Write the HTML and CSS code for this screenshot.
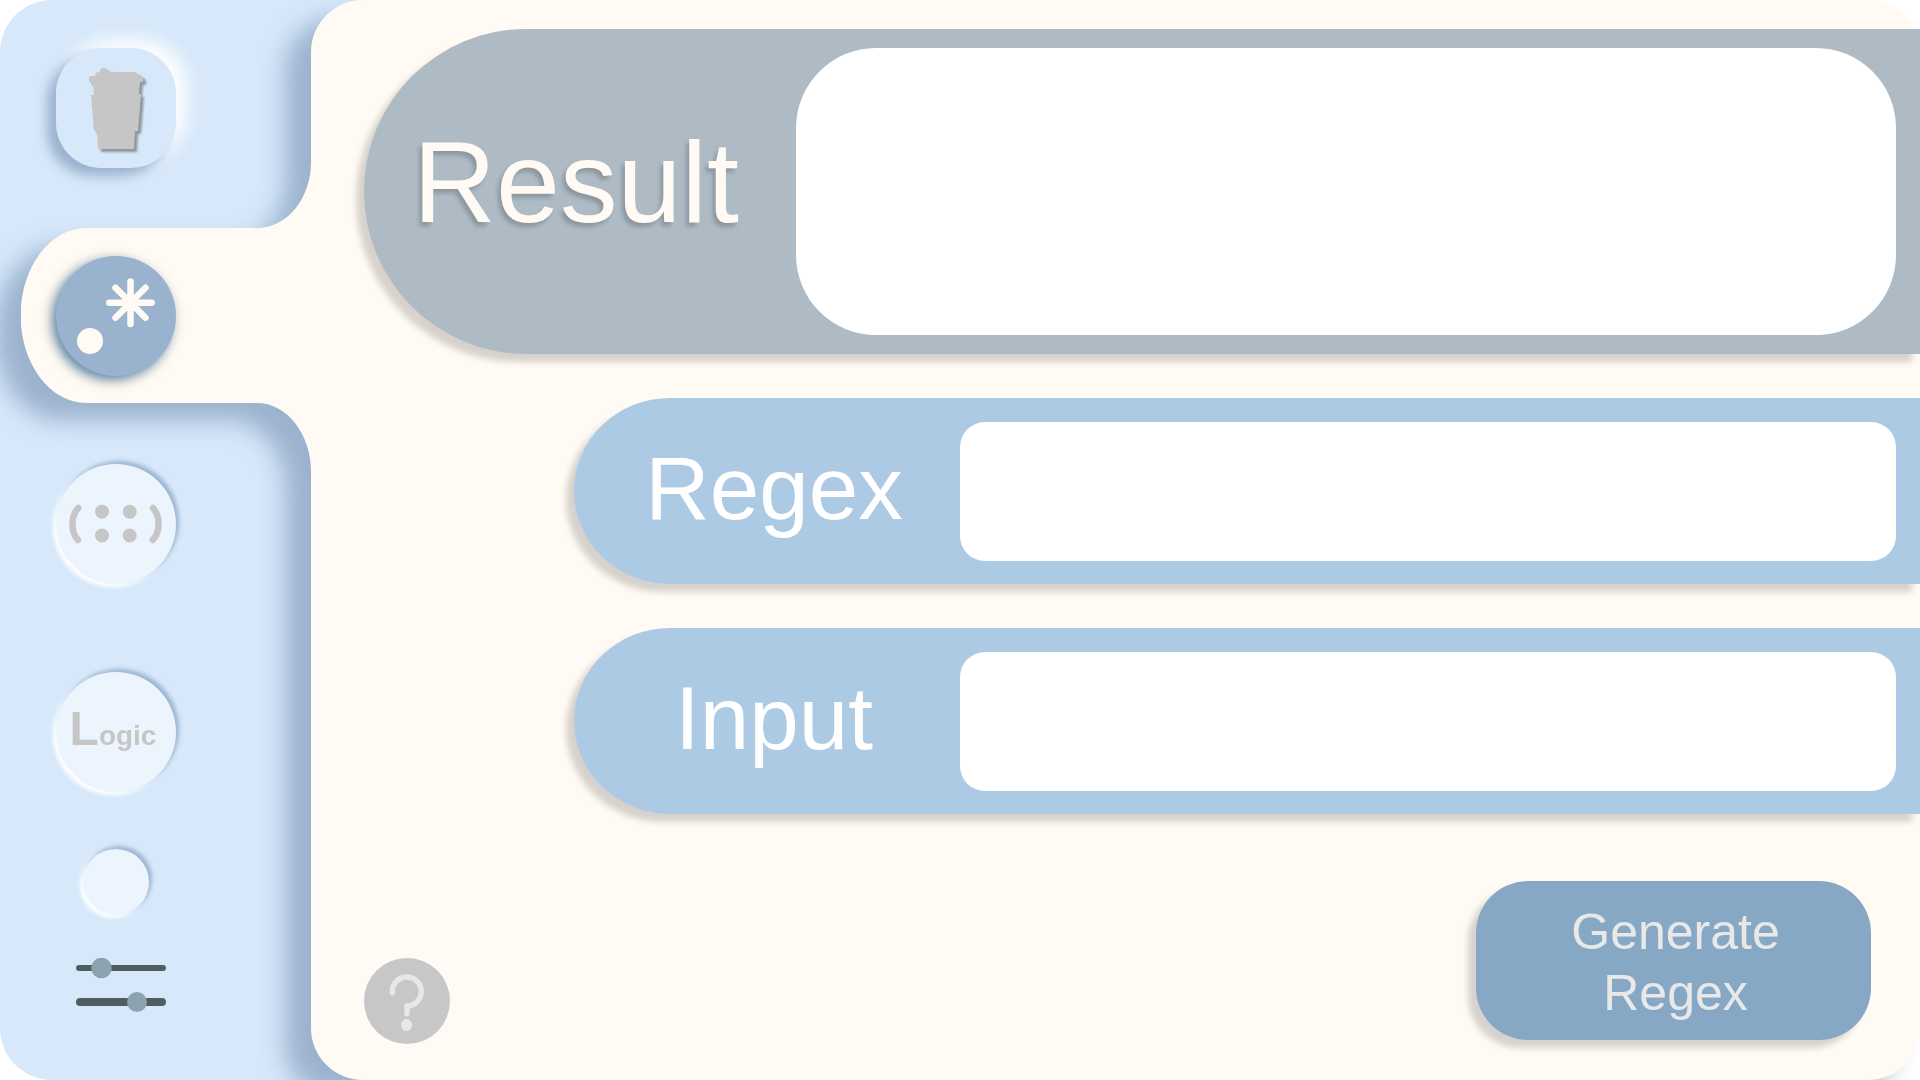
FILE: index.html
```html
<!DOCTYPE html>
<html lang="en">
<head>
<meta charset="utf-8">
<meta name="viewport" content="width=device-width, initial-scale=1">
<title>Regex Generator</title>
<link rel="stylesheet" href="styles.css">
</head>
<body>
<div class="app">
  <nav class="sidebar" aria-label="Tools">
    <button class="tool tool-trash" type="button" aria-label="Clear">
      <svg viewBox="0 0 120 120" aria-hidden="true">
        <path class="cup" d="M40 25 Q41 24 44 24 A4 4 0 1 1 52 24 H79 Q81 24 82 27 Q87 27 87 31 V34 H84 L83 46 H85 L82 83 H79 L78 101 H42 L41 83 H38 L35 47 H38 L37 34 H33 V30 Q33 28 36 28 H39 Z"/>
      </svg>
    </button>
    <button class="tool tool-active" type="button" aria-label="Wildcards" aria-current="page">
      <svg viewBox="0 0 120 120" aria-hidden="true">
        <path class="star" d="M74.500 25.500V68M53.300 46.700H95.700M59.500 31.700L89.500 61.700M89.500 31.700L59.500 61.700"/>
        <circle class="point" cx="34" cy="85" r="13"/>
      </svg>
    </button>
    <button class="tool tool-round" type="button" aria-label="Groups">
      <svg viewBox="0 0 120 120" aria-hidden="true">
        <path class="paren" d="M22.300 44C14.500 52 14.500 68 22 76M97 44C104.500 52 104.500 68 96.700 76"/>
        <g class="dots"><circle cx="46" cy="47.700" r="7"/><circle cx="73.700" cy="47.700" r="7"/><circle cx="46" cy="71.500" r="7"/><circle cx="73.700" cy="71.500" r="7"/></g>
      </svg>
    </button>
    <button class="tool tool-round tool-logic" type="button"><span class="logic"><span class="logic-cap">L</span>ogic</span></button>
    <button class="tool-small" type="button" aria-label="More"></button>
    <button class="settings" type="button" aria-label="Settings">
      <svg viewBox="0 0 100 54" width="100" height="54" aria-hidden="true">
        <rect class="track" x="10" y="7" width="90" height="6" rx="3"/>
        <circle class="knob" cx="35.500" cy="10" r="10.300"/>
        <rect class="track" x="10" y="40" width="90" height="8" rx="4"/>
        <circle class="knob" cx="71" cy="44" r="10"/>
      </svg>
    </button>
  </nav>

  <main class="panel">
    <div class="panel-shape" aria-hidden="true">
      <svg class="tab" viewBox="0 0 292 310" width="292" height="310">
        <path d="M292 0H290A54 66 0 0 1 236 66H65A65 87 0 0 0 65 241H236A54 69 0 0 1 290 310H292Z"/>
      </svg>
    </div>
    <form class="form">
      <div class="bar bar-result">
        <label for="result">Result</label>
        <textarea id="result" readonly></textarea>
      </div>
      <div class="bar bar-field">
        <label for="regex">Regex</label>
        <input id="regex" type="text">
      </div>
      <div class="bar bar-field">
        <label for="input">Input</label>
        <input id="input" type="text">
      </div>
      <div class="footer">
        <button class="help" type="button" aria-label="Help">
          <svg viewBox="0 0 86 86" aria-hidden="true">
            <path class="hook" d="M28.300 34.700A14.500 14.500 0 1 1 43 48V55.500"/>
            <ellipse class="hook-dot" cx="42.500" cy="67" rx="5.500" ry="6"/>
          </svg>
        </button>
        <button class="generate" type="button">Generate Regex</button>
      </div>
    </form>
  </main>
</div>
</body>
</html>
```
FILE: styles.css
```css
* {
  box-sizing: border-box;
}

body {
  margin: 0;
  background: #fff;
  font-family: "Liberation Sans", Arial, sans-serif;
}

button {
  padding: 0;
  border: 0;
  font: inherit;
  cursor: pointer;
}

svg {
  display: block;
}

.app {
  display: flex;
  min-height: 100vh;
  isolation: isolate;
  position: relative;
  overflow: hidden;
}

/* Sidebar: its background runs on beneath the rounded edge of the panel */
.sidebar {
  flex: none;
  width: 311px;
  padding: 48px 0 48px 56px;
  display: grid;
  grid-template-columns: 120px;
  justify-items: center;
  align-content: start;
}

.sidebar::before {
  content: "";
  position: absolute;
  z-index: -2;
  inset: 0 auto 0 0;
  width: 480px;
  border-radius: 52px;
  background: #d7e8fa;
}

.tool {
  position: relative;
  z-index: 1;
  width: 120px;
  height: 120px;
  margin-bottom: 88px;
  border-radius: 50%;
}

.tool-trash {
  border-radius: 45px;
  background: #d7e8fa;
  box-shadow: -9px 8px 12px #9bb2ce, 10px -8px 18px #fff;
}

.tool-active {
  background: #99b2cd;
  box-shadow: -4px 4px 12px #5b83a0;
}

.tool-round,
.tool-small {
  background: #ecf5fd;
  box-shadow: 3px -3px 4px #9bb5d2, -3px 3px 4px #fff;
}

.tool-logic {
  margin-bottom: 57px;
}

.tool-small {
  width: 66px;
  height: 66px;
  margin-bottom: 43px;
  border-radius: 50%;
}

.settings {
  background: none;
}

.cup {
  fill: #c6c6c6;
  filter: drop-shadow(3px 3px 1px #8f959c);
}

.star {
  fill: none;
  stroke: #fffaf3;
  stroke-width: 6.5;
  stroke-linecap: round;
}

.point {
  fill: #fffaf3;
}

.paren {
  fill: none;
  stroke: #c6c6c6;
  stroke-width: 6.5;
  stroke-linecap: round;
}

.dots {
  fill: #c6c6c6;
}

.logic {
  display: block;
  padding-right: 6px;
  color: #c6c6c6;
  font-size: 28px;
  font-weight: bold;
  line-height: 60px;
}

.logic-cap {
  font-size: 48px;
}

.track {
  fill: #4f5f60;
}

.knob {
  fill: #8ba2b1;
}

/* Panel */
.panel {
  position: relative;
  flex: 1;
  min-width: 0;
  display: flex;
}

.panel-shape {
  position: absolute;
  z-index: -1;
  inset: 0;
  border-radius: 52px;
  background: #fffaf3;
  filter: drop-shadow(-26px 18px 12px #9bb2ce);
}

.tab {
  position: absolute;
  top: 162px;
  left: -290px;
  fill: #fffaf3;
}

.form {
  flex: 1;
  min-width: 0;
  display: flex;
  flex-direction: column;
  gap: 44px;
  padding-top: 29px;
}

.bar {
  display: grid;
  box-shadow: -8px 8px 6px rgba(0, 0, 0, 0.16);
}

.bar label {
  align-self: center;
  text-align: center;
}

.bar input,
.bar textarea {
  width: 100%;
  min-width: 0;
  border: 0;
  outline: 0;
  background: #fff;
  resize: none;
}

.bar-result {
  grid-template-columns: 432px 1fr;
  margin-left: 53px;
  padding: 19px 24px 19px 0;
  border-radius: 163px 0 0 163px;
  background: #aebbc5;
  color: #fffaf3;
}

.bar-result label {
  padding: 0 8px 20px 0;
  font-size: 115px;
  line-height: 132px;
  text-shadow: -3px 4px 4px rgba(0, 0, 0, 0.2);
}

.bar-result textarea {
  height: 287px;
  padding: 24px 48px;
  border-radius: 80px;
  font: 48px/60px "Liberation Sans", Arial, sans-serif;
}

.bar-field {
  grid-template-columns: 386px 1fr;
  margin-left: 263px;
  padding: 24px 24px 23px 0;
  border-radius: 96px 0 0 96px / 93px 0 0 93px;
  background: #adcae5;
  color: #fff;
}

.bar-field label {
  padding: 0 0 8px 14px;
  font-size: 89px;
  line-height: 104px;
}

.bar-field input {
  height: 139px;
  padding: 0 24px;
  border-radius: 25px;
  font: 48px/60px "Liberation Sans", Arial, sans-serif;
}

.footer {
  display: flex;
  justify-content: space-between;
  align-items: flex-end;
  margin-top: auto;
  padding: 0 49px 36px 53px;
}

.help {
  width: 86px;
  height: 86px;
  border-radius: 50%;
  background: #c7c7c7;
}

.hook {
  fill: none;
  stroke: #e8e8e8;
  stroke-width: 5.5;
  stroke-linecap: round;
  stroke-linejoin: round;
}

.hook-dot {
  fill: #e8e8e8;
}

.generate {
  width: 395px;
  margin-bottom: 4px;
  padding: 21px 80px 16px 84px;
  border-radius: 52px;
  background: #87a8c5;
  box-shadow: -8px 8px 6px rgba(0, 0, 0, 0.16);
  color: #e8e8e8;
  font-size: 50px;
  line-height: 61px;
}
```
